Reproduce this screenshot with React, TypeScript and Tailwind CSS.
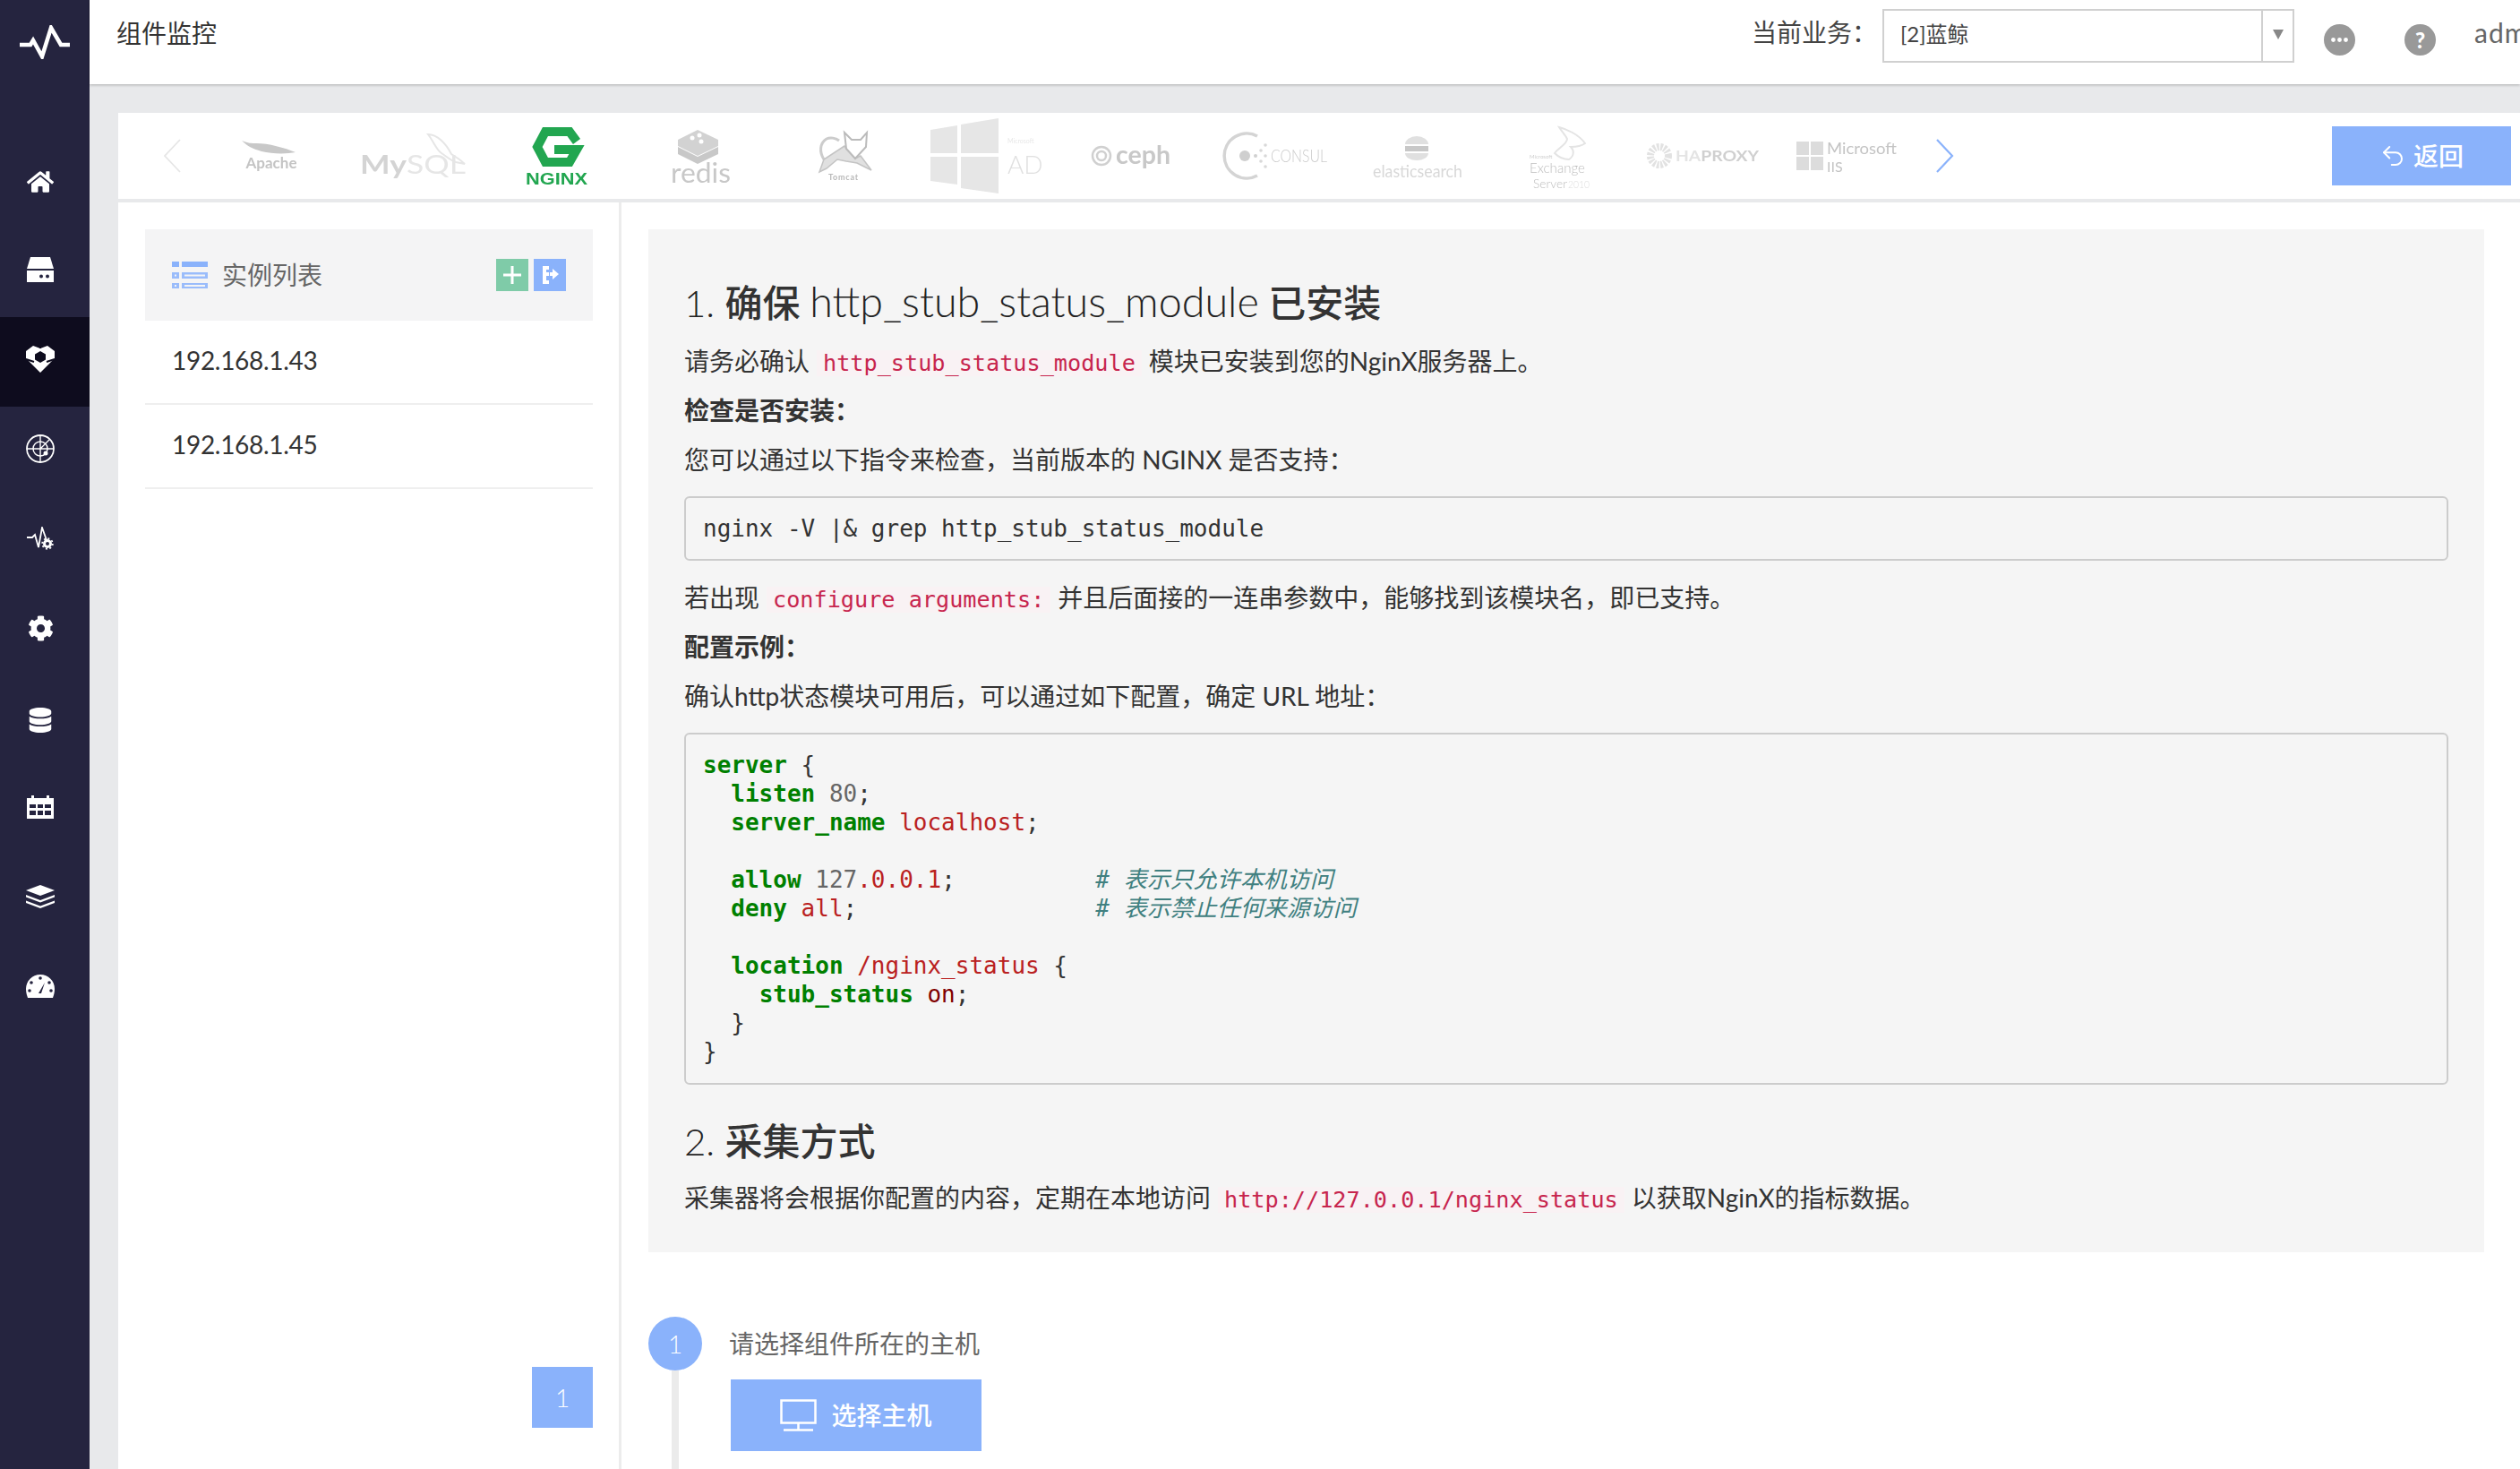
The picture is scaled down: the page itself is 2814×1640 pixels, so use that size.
import React from "react";
import { Undo2 } from "lucide-react";
import { FaHome, FaCog, FaDatabase } from "react-icons/fa";

const sans = "font-['Lato','Noto_Sans_CJK_SC',sans-serif]";
const mono = "font-['DejaVu_Sans_Mono','Noto_Sans_CJK_SC',monospace]";

const NavIcon = ({ children, active }: { children: React.ReactNode; active?: boolean }) => (
  <div className={`flex h-[100px] items-center justify-center pb-[6px] pr-[10px] text-white ${active ? "bg-[#0e0c1e]" : ""}`}>
    {children}
  </div>
);

const Sidebar = () => (
  <aside className="flex h-full w-[100px] shrink-0 flex-col bg-[#25243f]">
    <div className="flex h-[154px] items-start justify-center pt-[28px]">
      <svg width="56" height="38" viewBox="0 0 56 38" fill="none" stroke="#fff" strokeWidth="4.5">
        <path d="M0 22h12l3-5 10 18 10-32 11 19h10" />
      </svg>
    </div>
    <NavIcon><FaHome size={30} className="mt-[3px]" /></NavIcon>
    <NavIcon>
      <svg width="30" height="28" viewBox="0 0 30 28" fill="#fff">
        <path d="M4 0h22l4 13H0z" />
        <path d="M0 15h30v13H0z" />
        <circle cx="16" cy="21.500" r="2" fill="#25243f" />
        <circle cx="23" cy="21.500" r="2" fill="#25243f" />
      </svg>
    </NavIcon>
    <NavIcon active>
      <svg width="32" height="30" viewBox="0 0 32 30" className="blur-[0.5px]">
        <path d="M8 0l8 3 8-3 8 6v8l-4 4-12 12L4 18l-4-4V6z" fill="#fff" />
        <path d="M16 6l6 3.500v6L16 19l-6-3.500v-6z" fill="#0e0c1e" />
        <path d="M0 15l9 3M32 15l-9 3M16 0v3" stroke="#0e0c1e" strokeWidth="2" />
      </svg>
    </NavIcon>
    <NavIcon>
      <svg width="32" height="32" viewBox="0 0 32 32" fill="none" stroke="#fff" strokeWidth="1.800">
        <circle cx="16" cy="16" r="15" />
        <circle cx="16" cy="16" r="8" strokeWidth="1.400" />
        <path d="M16 1v30M1 16h30M16 16L26 6" strokeWidth="1.400" />
        <circle cx="22" cy="21" r="2.500" fill="#fff" stroke="none" />
      </svg>
    </NavIcon>
    <NavIcon>
      <svg width="30" height="26" viewBox="0 0 30 26" fill="none" stroke="#fff" strokeWidth="1.800">
        <path d="M0 12h6l3-3 4 14 4-22 5 14" />
        <circle cx="23" cy="19" r="3.500" strokeWidth="3" />
        <circle cx="23" cy="19" r="5.800" strokeWidth="1.800" strokeDasharray="2 2.500" />
      </svg>
    </NavIcon>
    <NavIcon><FaCog size={29} /></NavIcon>
    <NavIcon><FaDatabase size={28} className="mt-[6px]" /></NavIcon>
    <NavIcon>
      <svg width="30" height="26" viewBox="0 0 30 26" fill="#fff">
        <path d="M0 3h5V0h3v3h14V0h3v3h5v23H0z" />
        <path d="M3 10h7v4H3zM12 10h6v4h-6zM20 10h7v4h-7zM3 17h7v5H3zM12 17h6v5h-6zM20 17h7v5h-7z" fill="#25243f" />
      </svg>
    </NavIcon>
    <NavIcon>
      <svg width="32" height="26" viewBox="0 0 32 26" fill="#fff">
        <path d="M16 0l16 6-16 6L0 6z" />
        <path d="M0 11l16 6 16-6v2.500l-16 6-16-6z" />
        <path d="M0 17.500l16 6 16-6v2.500l-16 6-16-6z" />
      </svg>
    </NavIcon>
    <NavIcon>
      <svg width="32" height="26" viewBox="0 0 32 26" fill="#fff">
        <path d="M16 0c9 0 16 7 16 16 0 4-1 7-2 10H2C1 23 0 20 0 16 0 7 7 0 16 0z" />
        <path d="M21 9l-4 12h-3z" fill="#25243f" />
        <circle cx="16" cy="4" r="1.800" fill="#25243f" />
        <circle cx="6" cy="9" r="1.800" fill="#25243f" />
        <circle cx="26" cy="9" r="1.800" fill="#25243f" />
        <circle cx="4" cy="18" r="1.800" fill="#25243f" />
        <circle cx="28" cy="18" r="1.800" fill="#25243f" />
      </svg>
    </NavIcon>
  </aside>
);

const Header = () => (
  <header className="relative z-10 flex h-[94px] shrink-0 items-start bg-white pl-[30px] shadow-[0_1px_3px_rgba(0,0,0,0.25)]">
    <div className="mt-[17px] text-[28px] leading-[40px] text-[#333]">组件监控</div>
    <div className="ml-auto flex items-start">
      <div className="mt-[16px] text-[28px] leading-[40px] text-[#444]">当前业务：</div>
      <div className="ml-[6px] mt-[10px] flex h-[60px] w-[460px] border-2 border-[#d0d0d0]">
        <div className="flex-1 pl-[18px] pt-[8px] text-[24px] leading-[36px] text-[#444]">[2]蓝鲸</div>
        <div className="flex w-[35px] justify-center border-l-2 border-[#d0d0d0] pt-[21px]">
          <svg width="12" height="11" viewBox="0 0 12 11" fill="#888"><path d="M0 0h12L6 11z" /></svg>
        </div>
      </div>
      <svg width="35" height="35" viewBox="0 0 35 35" className="ml-[33px] mt-[27px]">
        <circle cx="17.500" cy="17.500" r="17.500" fill="#999" />
        <circle cx="10.500" cy="17.500" r="2.400" fill="#fff" />
        <circle cx="17.500" cy="17.500" r="2.400" fill="#fff" />
        <circle cx="24.500" cy="17.500" r="2.400" fill="#fff" />
      </svg>
      <div className="ml-[55px] mt-[27px] flex h-[35px] w-[35px] items-center justify-center rounded-full bg-[#999] text-[24px] font-black text-white">?</div>
      <div className="ml-[43px] mt-[16px] w-[51px] overflow-hidden text-[30px] leading-[40px] tracking-[1px] text-[#666]">admin</div>
    </div>
  </header>
);

const Logo = ({ children }: { children: React.ReactNode }) => (
  <div className="h-[96px] w-[160px] shrink-0">
    <svg width="160" height="96" viewBox="0 0 160 96" fontFamily="Lato, sans-serif" className="blur-[0.7px]">
      {children}
    </svg>
  </div>
);

const LogoStrip = () => (
  <div className="flex h-[96px] shrink-0 items-center bg-white">
    <div className="w-[91px] pl-[50px]">
      <svg width="20" height="38" viewBox="0 0 20 38" fill="none" stroke="#e6e6e6" strokeWidth="1.800">
        <path d="M19 1L2 19l17 18" />
      </svg>
    </div>
    <Logo>
      <path d="M47 31c8 3 10 3 16 3 14 0 32 5 44 10-10 2-26 2-38-1-10-3-16-6-22-12z" fill="#c8c8c8" />
      <text x="80" y="62" textAnchor="middle" fontSize="17" fontWeight="700" fill="#c4c4c4">Apache</text>
    </Logo>
    <Logo>
      <path d="M95 24c10 0 20 10 26 22l9 6 6 5-10-2c-6-2-10-6-16-10-6-4-8-12-15-21z" fill="none" stroke="#e6e6e6" strokeWidth="2" />
      <text x="19" y="68" fontSize="28" fontWeight="700" fill="#d4d4d4" textLength="118" lengthAdjust="spacingAndGlyphs">My<tspan fill="#e6e6e6" fontWeight="400">SQL</tspan></text>
    </Logo>
    <Logo>
      <path d="M101 32l-8-11H66L57 38l9 17h27l8-14H76" fill="none" stroke="#22a650" strokeWidth="10" />
      <text x="44" y="80" fontFamily="Liberation Sans, sans-serif" fontSize="19" fontWeight="700" fill="#22a650" textLength="69" lengthAdjust="spacingAndGlyphs">NGINX</text>
    </Logo>
    <Logo>
      <path d="M76 19l23 11v7L76 48 54 37v-7z" fill="#d2d2d2" />
      <path d="M54 38l22 11 23-11v8L76 57 54 46z" fill="#c8c8c8" />
      <circle cx="70" cy="28" r="2.500" fill="#fff" />
      <circle cx="78" cy="25" r="2.500" fill="#fff" />
      <circle cx="80" cy="32" r="2.500" fill="#fff" />
      <text x="46" y="78" fontSize="30" fill="#c8c8c8" textLength="67" lengthAdjust="spacingAndGlyphs">redis</text>
    </Logo>
    <Logo>
      <path d="M57 52C52 44 52 34 60 29c4-2 10-1 14 2" fill="none" stroke="#cccccc" strokeWidth="3" />
      <path d="M80 37L57 52l-5 14 8-4 12-10 10 2 12 2 16 8-12-16-6 3-10-11z" fill="#e0e0e0" stroke="#c4c4c4" strokeWidth="1.500" />
      <path d="M80 22l8 8h10l7-8-1 16-12 13-10-11z" fill="#fff" stroke="#bbbbbb" strokeWidth="2" />
      <text x="62" y="75" fontSize="9" fontWeight="700" fill="#b8b8b8" textLength="33">Tomcat</text>
    </Logo>
    <Logo>
      <path d="M16 19l30-5v31H16zM50 13l42-7v39H50zM16 49h30v31l-30-4zM50 49h42v41l-42-6z" fill="#e6e6e6" />
      <text x="102" y="68" fontSize="28" fontWeight="300" fill="#e0e0e0">AD</text>
      <text x="102" y="34" fontSize="7" fill="#e8e8e8">Microsoft</text>
    </Logo>
    <Logo>
      <circle cx="47" cy="48" r="10" fill="none" stroke="#d0d0d0" strokeWidth="2.500" />
      <circle cx="47" cy="48" r="5" fill="none" stroke="#d0d0d0" strokeWidth="2.500" />
      <text x="63" y="57" fontSize="28" fontWeight="700" fill="#c8c8c8" textLength="61" lengthAdjust="spacingAndGlyphs">ceph</text>
    </Logo>
    <Logo>
      <path d="M61 26a25 25 0 1 0 0 44" fill="none" stroke="#d4d4d4" strokeWidth="3.500" />
      <circle cx="47" cy="48" r="6" fill="#cfcfcf" />
      <circle cx="59" cy="48" r="2" fill="#d0d0d0" />
      <circle cx="65" cy="42" r="1.800" fill="#d8d8d8" />
      <circle cx="65" cy="54" r="1.800" fill="#d8d8d8" />
      <circle cx="70" cy="36" r="1.800" fill="#d8d8d8" />
      <circle cx="70" cy="48" r="1.800" fill="#d8d8d8" />
      <circle cx="70" cy="60" r="1.800" fill="#d8d8d8" />
      <text x="76" y="55" fontSize="19" fontWeight="300" fill="#cccccc" textLength="63" lengthAdjust="spacingAndGlyphs">CONSUL</text>
    </Logo>
    <Logo>
      <path d="M66 35a13 9 0 0 1 26 0z" fill="#e0e0e0" />
      <path d="M66 37h26v6H66z" fill="#c8c8c8" />
      <path d="M66 45a13 8 0 0 0 26 0z" fill="#e0e0e0" />
      <text x="30" y="72" fontSize="20" fill="#d8d8d8" textLength="100" lengthAdjust="spacingAndGlyphs">elasticsearch</text>
    </Logo>
    <Logo>
      <path d="M78 16c8 2 22 8 29 18-4 3-10 4-16 4 4 4 4 10-2 14-6 0-12-3-16-7 4-6 14-10 14-16-2-4-6-8-9-13z" fill="none" stroke="#e4e4e4" strokeWidth="2" />
      <text x="45" y="51" fontSize="6" fill="#cfcfcf">Microsoft</text>
      <text x="45" y="67" fontSize="16" fontWeight="300" fill="#bdbdbd" textLength="62" lengthAdjust="spacingAndGlyphs">Exchange</text>
      <text x="49" y="84" fontSize="14" fontWeight="300" fill="#bdbdbd" textLength="38" lengthAdjust="spacingAndGlyphs">Server</text>
      <text x="88" y="84" fontSize="12" fontWeight="300" fill="#dedede" textLength="24" lengthAdjust="spacingAndGlyphs">2010</text>
    </Logo>
    <Logo>
      <circle cx="30" cy="48" r="10" fill="none" stroke="#e2e2e2" strokeWidth="8" strokeDasharray="2.500 1.500" />
      <text x="48" y="54" fontSize="17" fontWeight="700" fill="#d0d0d0" textLength="93" lengthAdjust="spacingAndGlyphs"><tspan fill="#e4e4e4">HA</tspan>PROXY</text>
    </Logo>
    <Logo>
      <path d="M23 32h14v15H23zM39 32h14v15H39zM23 49h14v15H23zM39 49h14v15H39z" fill="#dcdcdc" />
      <text x="57" y="46" fontSize="18" fontWeight="400" fill="#c4c4c4" textLength="78" lengthAdjust="spacingAndGlyphs">Microsoft</text>
      <text x="57" y="66" fontSize="16" fontWeight="400" fill="#c4c4c4">IIS</text>
    </Logo>
    <svg width="20" height="38" viewBox="0 0 20 38" fill="none" stroke="#8ab2fb" strokeWidth="2.200" className="ml-[19px]">
      <path d="M1 1l17 18L1 37" />
    </svg>
    <button className="ml-auto mr-[10px] flex h-[66px] w-[200px] items-center justify-center gap-[8px] bg-[#8ab2fb] text-[28px] font-medium text-white">
      <Undo2 size={30} strokeWidth={1.6} />
      返回
    </button>
  </div>
);

const InstanceList = () => (
  <div className="relative flex h-full w-[562px] shrink-0 flex-col border-r-[3px] border-[#ececec] py-[30px] pl-[30px] pr-[29px]">
    <div className="flex h-[102px] items-center bg-[#f4f4f5] pl-[30px] pr-[30px]">
      <svg width="40" height="30" viewBox="0 0 40 30" fill="#8ab2fb">
        <path d="M0 0h8v6H0zM11 0h29v6H11z" />
        <path d="M0 12h8v7H0zM11 12h29v7H11z" fillOpacity="0.85" />
        <path d="M0 24h8v6H0zM11 24h29v6H11z" fillOpacity="0.85" />
        <path d="M3 14.500h2v2H3zM3 26h2v2H3zM14 14.500h23v2H14zM14 26h23v2H14z" fill="#f4f4f5" />
      </svg>
      <span className="ml-[16px] text-[28px] text-[#666]">实例列表</span>
      <span className="ml-auto flex h-[36px] w-[36px] items-center justify-center bg-[#7fcba8] text-white">
        <svg width="20" height="20" viewBox="0 0 20 20" fill="#fff"><path d="M8.500 0h3v8.500H20v3h-8.500V20h-3v-8.500H0v-3h8.500z" /></svg>
      </span>
      <span className="ml-[6px] flex h-[36px] w-[36px] items-center justify-center bg-[#8ab2fb]">
        <svg width="22" height="22" viewBox="0 0 22 22" fill="#fff"><path d="M3 1h7v4H7v3h3v4H7v5h3v4H3zM11 8h3V4l7 6-7 6v-4h-3z" /></svg>
      </span>
    </div>
    {["192.168.1.43", "192.168.1.45"].map((ip) => (
      <div key={ip} className="flex h-[94px] items-center border-b-2 border-[#efefef] pb-[4px] pl-[30px] text-[28px] text-[#333]">
        <span className="tracking-[-0.3px]">{ip}</span>
      </div>
    ))}
    <div className="absolute bottom-[46px] right-[29px] flex h-[68px] w-[68px] items-center justify-center bg-[#8ab2fb] text-[28px] font-light text-white">1</div>
  </div>
);

const Code = ({ children }: { children: React.ReactNode }) => (
  <code className={`${mono} mx-[8px] bg-[#f9f2f4] px-[7px] text-[25.2px] leading-none text-[#c7254e]`}>{children}</code>
);

const K = ({ children }: { children: React.ReactNode }) => <span className="font-bold text-[#008000]">{children}</span>;
const S = ({ children }: { children: React.ReactNode }) => <span className="text-[#ba2121]">{children}</span>;
const N = ({ children }: { children: React.ReactNode }) => <span className="text-[#666]">{children}</span>;
const C = ({ children }: { children: React.ReactNode }) => <span className="italic text-[#408080]">{children}</span>;

const P = ({ children, bold }: { children: React.ReactNode; bold?: boolean }) => (
  <p className={`mb-[15px] text-[28px] leading-[40px] text-[#333] ${bold ? "font-semibold" : ""}`}>{children}</p>
);

const Doc = () => (
  <div className="w-[2050px] bg-[#f5f5f5] px-[40px] pb-[41px] pt-[55px]">
    <h2 className="mb-[20px] text-[42px] font-medium leading-[50px] text-[#333]">
      <span className="font-light text-[#222]">1. </span>确保 <span className="text-[46.7px] font-light text-[#222]">http_stub_status_module</span> 已安装
    </h2>
    <P>请务必确认<Code>http_stub_status_module</Code>模块已安装到您的NginX服务器上。</P>
    <P bold>检查是否安装：</P>
    <P>您可以通过以下指令来检查，当前版本的 NGINX 是否支持：</P>
    <pre className={`${mono} mb-[21px] mt-[21px] h-[72px] rounded-[6px] border-2 border-[#ccc] px-[19px] py-[18px] text-[26px] leading-[32px] text-[#333]`}>
      nginx -V |&amp; grep http_stub_status_module
    </pre>
    <P>若出现<Code>configure arguments:</Code>并且后面接的一连串参数中，能够找到该模块名，即已支持。</P>
    <P bold>配置示例：</P>
    <P>确认http状态模块可用后，可以通过如下配置，确定 URL 地址：</P>
    <pre className={`${mono} mt-[21px] h-[393px] rounded-[6px] border-2 border-[#ccc] px-[19px] py-[18px] text-[26px] leading-[32px] text-[#333]`}>
      <K>server</K> {"{\n"}
      {"  "}<K>listen</K> <N>80</N>;{"\n"}
      {"  "}<K>server_name</K> <S>localhost</S>;{"\n\n"}
      {"  "}<K>allow</K> <N>127</N><S>.0.0.1</S>;{"          "}<C># 表示只允许本机访问</C>{"\n"}
      {"  "}<K>deny</K> <S>all</S>;{"                 "}<C># 表示禁止任何来源访问</C>{"\n\n"}
      {"  "}<K>location</K> <S>/nginx_status</S> {"{\n"}
      {"    "}<K>stub_status</K> <span className="text-[#800000]">on</span>;{"\n"}
      {"  }\n}"}
    </pre>
    <h2 className="mb-[18px] mt-[38px] text-[42px] font-medium leading-[50px] text-[#333]">
      <span className="font-light text-[#222]">2. </span>采集方式
    </h2>
    <p className="text-[28px] leading-[40px] text-[#333]">采集器将会根据你配置的内容，定期在本地访问<Code>http://127.0.0.1/nginx_status</Code>以获取NginX的指标数据。</p>
  </div>
);

const Steps = () => (
  <div className="mt-[72px] flex min-h-[400px] gap-[32px]">
    <div className="flex w-[60px] flex-col items-center">
      <div className="flex h-[60px] w-[60px] shrink-0 items-center justify-center rounded-full bg-[#8ab2fb] text-[28px] font-light text-white">1</div>
      <div className="w-[8px] flex-1 bg-[#ebebeb]" />
    </div>
    <div>
      <div className="-ml-[2px] flex h-[60px] items-center text-[28px] text-[#666]">请选择组件所在的主机</div>
      <button className="mt-[10px] flex h-[80px] w-[280px] items-center justify-center gap-[16px] bg-[#8ab2fb] text-[28px] font-medium text-white">
        <svg width="41" height="36" viewBox="0 0 41 36" fill="none" stroke="#fff" strokeWidth="2.500">
          <path d="M1.500 1.500h38v25h-38z" />
          <path d="M20.500 27v7M4 34.500h33" />
        </svg>
        选择主机
      </button>
    </div>
  </div>
);

export default function App() {
  return (
    <div className={`${sans} flex h-[1640px] w-[2814px] overflow-hidden bg-white`}>
      <Sidebar />
      <div className="flex min-w-0 flex-1 flex-col bg-[#e8e9eb]">
        <Header />
        <div className="flex min-h-0 flex-1 flex-col pl-[32px] pt-[32px]">
          <LogoStrip />
          <div className="mt-[4px] flex min-h-0 flex-1 bg-white">
            <InstanceList />
            <div className="pl-[30px] pt-[30px]">
              <Doc />
              <Steps />
            </div>
          </div>
        </div>
      </div>
    </div>
  );
}
